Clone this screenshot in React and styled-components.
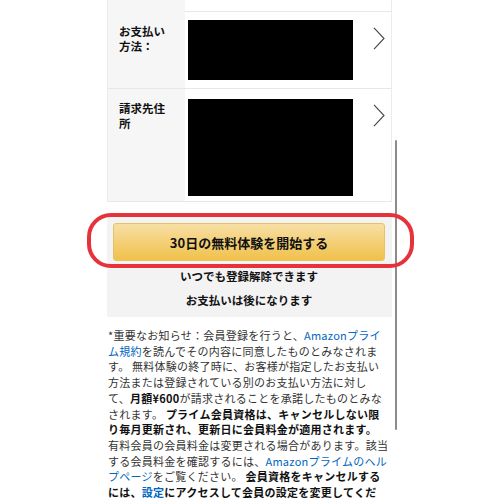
import React from 'react';
import styled, { createGlobalStyle } from 'styled-components';

const GlobalStyle = createGlobalStyle`
  body {
    margin: 0;
    background: #ffffff;
    font-family: "Noto Sans CJK JP", "Noto Sans", sans-serif;
    color: #111111;
  }
`;

const Screen = styled.div`
  position: relative;
  width: 500px;
  height: 500px;
  overflow: hidden;
  background: #ffffff;
`;

const Panel = styled.div`
  width: 285px;
  margin-left: 107px;
`;

const Table = styled.div`
  border-left: 1px solid #ececec;
  border-right: 1px solid #ececec;
`;

const Row = styled.div`
  display: grid;
  grid-template-columns: 77px 1fr;
  height: ${(p) => p.$height}px;
  box-sizing: border-box;
  border-bottom: 1px solid #e7e7e7;
`;

const Label = styled.div`
  background: #f6f6f6;
  padding: 12px 6px 0 11px;
  font-size: 11.5px;
  font-weight: 700;
  line-height: 15px;
  color: #111111;
`;

const Value = styled.div`
  display: flex;
  align-items: flex-start;
  padding: ${(p) => p.$top}px 0 0 3px;
`;

const Redacted = styled.div`
  width: 165px;
  height: ${(p) => p.$height}px;
  background: #000000;
`;

const Chevron = styled.svg`
  flex: none;
  margin: ${(p) => p.$top}px 0 0 20px;
`;

const ActionArea = styled.div`
  margin-top: 11px;
  height: 104px;
  box-sizing: border-box;
  background: #f3f3f3;
  padding: 10px 7px 0 6px;
`;

const StartButton = styled.button`
  display: block;
  width: 100%;
  height: 38px;
  border: 1px solid #e9c266;
  border-radius: 3px;
  background: linear-gradient(to bottom, #f7dfa5, #f0c14b);
  font-family: inherit;
  font-size: 13px;
  font-weight: 700;
  color: #111111;
  cursor: pointer;
`;

const Notes = styled.div`
  padding-top: 3px;
`;

const Note = styled.div`
  text-align: center;
  font-size: 11.5px;
  font-weight: 700;
  line-height: 24px;
  color: #111111;
`;

const Fine = styled.p`
  margin: 11px 0 0 1px;
  font-size: 11px;
  line-height: 15.7px;
  letter-spacing: 0.25px;
  color: #333333;
  white-space: nowrap;

  b {
    color: #111111;
  }
`;

const Link = styled.a`
  color: #0066c0;
  text-decoration: none;
  font-weight: ${(p) => (p.$bold ? 700 : 400)};
`;

const Scrollbar = styled.div`
  position: absolute;
  left: 395px;
  top: 140px;
  width: 2px;
  height: 290px;
  border-radius: 1px;
  background: #8c8c8c;
`;

const Highlight = styled.div`
  position: absolute;
  left: 87px;
  top: 213px;
  width: 327px;
  height: 55px;
  box-sizing: border-box;
  border: 4px solid #e6333b;
  border-radius: 24px;
  pointer-events: none;
`;

const ChevronIcon = ({ top }) => (
  <Chevron $top={top} width="12" height="23" viewBox="0 0 12 23">
    <polyline points="1,0.8 11,11.5 1,22.2" fill="none" stroke="#444" strokeWidth="1.1" />
  </Chevron>
);

export default function App() {
  return (
    <Screen>
      <GlobalStyle />
      <Panel>
        <Table>
          <Row $height={12}>
            <Label />
            <Value $top={0} />
          </Row>
          <Row $height={77}>
            <Label>
              お支払い
              <br />
              方法：
            </Label>
            <Value $top={8}>
              <Redacted $height={60} />
              <ChevronIcon top={7} />
            </Value>
          </Row>
          <Row $height={113}>
            <Label>
              請求先住
              <br />所
            </Label>
            <Value $top={10}>
              <Redacted $height={97} />
              <ChevronIcon top={5} />
            </Value>
          </Row>
        </Table>

        <ActionArea>
          <StartButton>30日の無料体験を開始する</StartButton>
          <Notes>
            <Note>いつでも登録解除できます</Note>
            <Note>お支払いは後になります</Note>
          </Notes>
        </ActionArea>

        <Fine>
          *重要なお知らせ：会員登録を行うと、<Link>Amazonプライ</Link>
          <br />
          <Link>ム規約</Link>を読んでその内容に同意したものとみなされま
          <br />
          す。 無料体験の終了時に、お客様が指定したお支払い
          <br />
          方法または登録されている別のお支払い方法に対し
          <br />
          て、<b>月額¥600</b>が請求されることを承諾したものとみな
          <br />
          されます。 <b>プライム会員資格は、キャンセルしない限</b>
          <br />
          <b>り毎月更新され、更新日に会員料金が適用されます。</b>
          <br />
          有料会員の会員料金は変更される場合があります。該当
          <br />
          する会員料金を確認するには、<Link>Amazonプライムのヘル</Link>
          <br />
          <Link>プページ</Link>をご覧ください。 <b>会員資格をキャンセルする</b>
          <br />
          <b>
            には、<Link $bold>設定</Link>にアクセスして会員の設定を変更してくだ
          </b>
          <br />
          <b>さい。</b>
        </Fine>
      </Panel>
      <Scrollbar />
      <Highlight />
    </Screen>
  );
}
